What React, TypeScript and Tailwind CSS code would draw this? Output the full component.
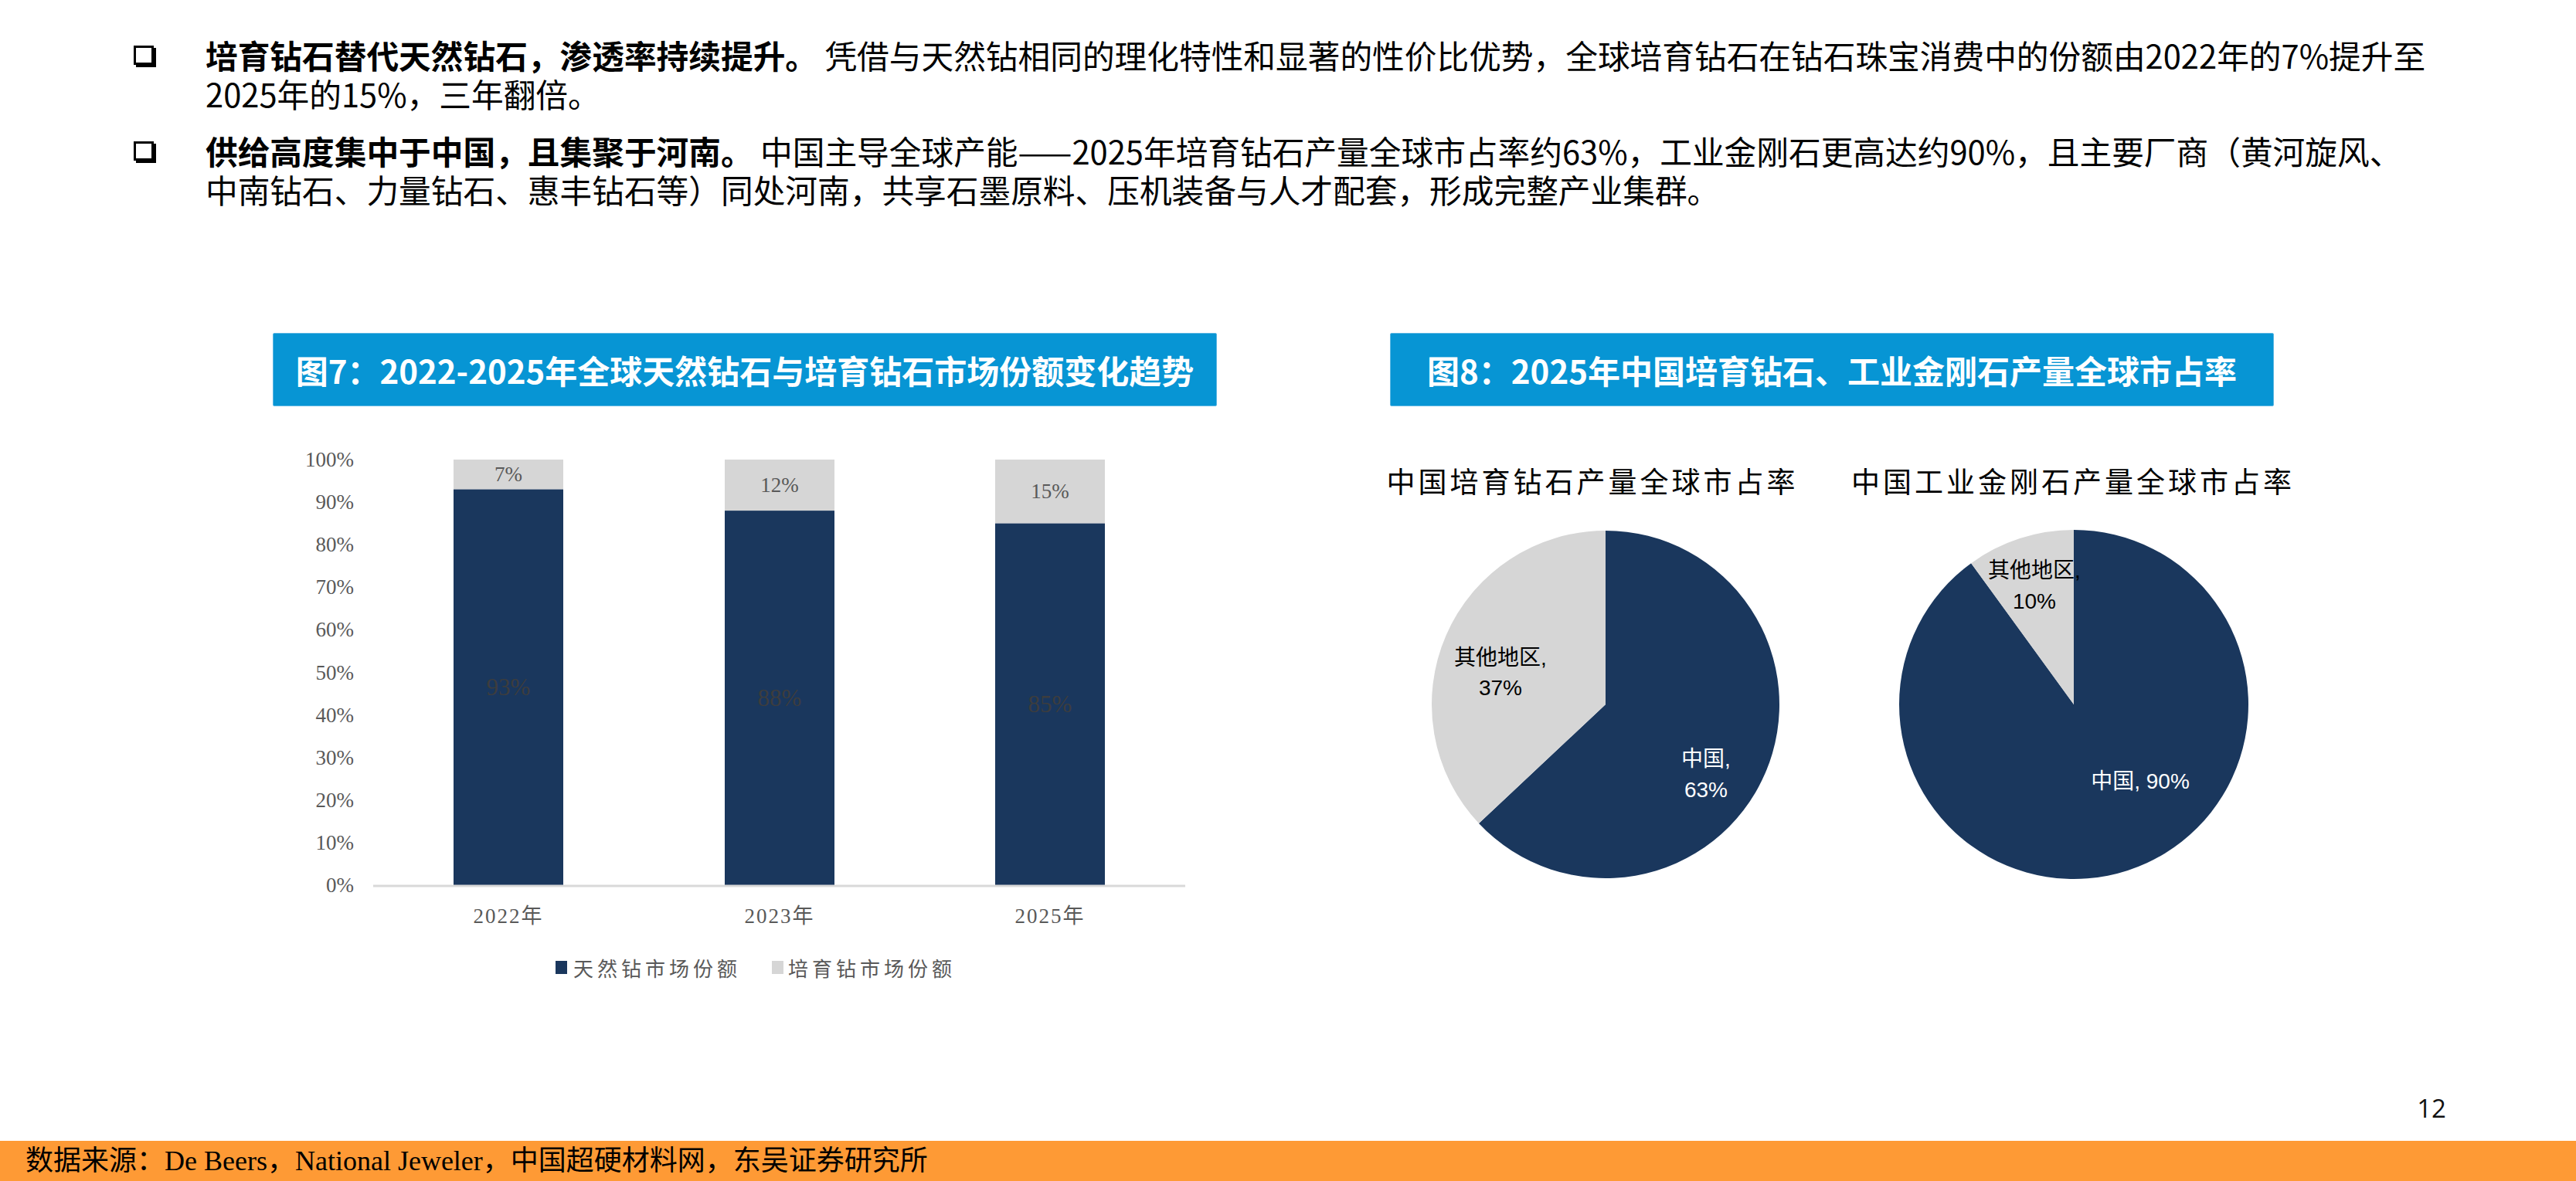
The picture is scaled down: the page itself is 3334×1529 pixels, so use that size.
import React from "react"

const NAVY = "#1a375d"
const GREY = "#d6d6d6"

function Bullet() {
    return (
        <div className="h-[50px] w-[32px] shrink-0 flex items-center">
            <div className="w-[26px] h-[25px] border-[3px] border-black bg-white shadow-[3px_3px_0_#000]" />
        </div>
    )
}

function TitleBox({ children, width }: { children: React.ReactNode; width: string }) {
    return (
        <div className={`${width} h-[95px] bg-[#0795d4] border border-[#5cb6e2] rounded-[2px] flex items-center justify-center`}>
            <span className="text-white font-bold text-[42px] leading-none whitespace-nowrap">{children}</span>
        </div>
    )
}

const bars = [
    { year: "2022年", natural: 93, lab: 7, x: 234 },
    { year: "2023年", natural: 88, lab: 12, x: 585 },
    { year: "2025年", natural: 85, lab: 15, x: 935 },
]

function BarChart() {
    const base = 606
    const unit = 5.51
    const serif = "'Liberation Serif', 'Noto Sans CJK SC', serif"
    return (
        <svg width={1222} height={760} className="block">
            {[0, 10, 20, 30, 40, 50, 60, 70, 80, 90, 100].map((v) => (
                <text key={v} x={105} y={base - unit * v} textAnchor="end" dominantBaseline="central" fontSize={27} fill="#595959" fontFamily={serif}>
                    {v}%
                </text>
            ))}
            {bars.map((b) => {
                const top = base - unit * 100
                const split = base - unit * b.natural
                return (
                    <g key={b.year}>
                        <rect x={b.x} y={top} width={142} height={split - top} fill={GREY} />
                        <rect x={b.x} y={split} width={142} height={base - split} fill={NAVY} />
                        <text x={b.x + 71} y={(top + split) / 2} textAnchor="middle" dominantBaseline="central" fontSize={27} fill="#595959" fontFamily={serif}>
                            {b.lab}%
                        </text>
                        <text x={b.x + 71} y={(split + base) / 2} textAnchor="middle" dominantBaseline="central" fontSize={31} fill="#3d3d3d" fontFamily={serif}>
                            {b.natural}%
                        </text>
                        <text x={b.x + 71} y={646} textAnchor="middle" dominantBaseline="central" fontSize={27} letterSpacing={2} fill="#595959" fontFamily={serif}>
                            {b.year}
                        </text>
                    </g>
                )
            })}
            <line x1={130} x2={1181} y1={base + 1} y2={base + 1} stroke="#d9d9d9" strokeWidth={3} />
            <rect x={366} y={704} width={15} height={17} fill={NAVY} />
            <text x={389} y={715} dominantBaseline="central" fontSize={26} letterSpacing={5} fill="#595959" fontFamily={serif}>
                天然钻市场份额
            </text>
            <rect x={646} y={704} width={15} height={17} fill={GREY} />
            <text x={667} y={715} dominantBaseline="central" fontSize={26} letterSpacing={5} fill="#595959" fontFamily={serif}>
                培育钻市场份额
            </text>
        </svg>
    )
}

function piePaths(cx: number, cy: number, r: number, share: number) {
    const a = share * 2 * Math.PI
    const ex = cx + r * Math.sin(a)
    const ey = cy - r * Math.cos(a)
    const big = share > 0.5 ? 1 : 0
    const main = `M${cx},${cy} L${cx},${cy - r} A${r},${r} 0 ${big} 1 ${ex},${ey} Z`
    const rest = `M${cx},${cy} L${ex},${ey} A${r},${r} 0 ${1 - big} 1 ${cx},${cy - r} Z`
    return { main, rest }
}

function PieCharts() {
    const sans = "'Liberation Sans', 'Noto Sans CJK SC', sans-serif"
    const p1 = piePaths(279, 372, 225, 0.63)
    const p2 = piePaths(885, 372, 226, 0.9)
    return (
        <svg width={1144} height={660} className="block overflow-visible">
            <text x={262} y={82} textAnchor="middle" dominantBaseline="central" fontSize={37} letterSpacing={4} fill="#000" fontFamily="'Noto Sans CJK SC', sans-serif">
                中国培育钻石产量全球市占率
            </text>
            <text x={884} y={82} textAnchor="middle" dominantBaseline="central" fontSize={37} letterSpacing={4} fill="#000" fontFamily="'Noto Sans CJK SC', sans-serif">
                中国工业金刚石产量全球市占率
            </text>

            <path d={p1.main} fill={NAVY} />
            <path d={p1.rest} fill={GREY} />
            <text x={143} y={311} textAnchor="middle" dominantBaseline="central" fontSize={28} fill="#000" fontFamily={sans}>其他地区,</text>
            <text x={143} y={350} textAnchor="middle" dominantBaseline="central" fontSize={28} fill="#000" fontFamily={sans}>37%</text>
            <text x={409} y={442} textAnchor="middle" dominantBaseline="central" fontSize={28} fill="#fff" fontFamily={sans}>中国,</text>
            <text x={409} y={482} textAnchor="middle" dominantBaseline="central" fontSize={28} fill="#fff" fontFamily={sans}>63%</text>

            <path d={p2.main} fill={NAVY} />
            <path d={p2.rest} fill={GREY} />
            <text x={834} y={198} textAnchor="middle" dominantBaseline="central" fontSize={28} fill="#000" fontFamily={sans}>其他地区,</text>
            <text x={834} y={238} textAnchor="middle" dominantBaseline="central" fontSize={28} fill="#000" fontFamily={sans}>10%</text>
            <text x={971} y={471} textAnchor="middle" dominantBaseline="central" fontSize={28} fill="#fff" fontFamily={sans}>中国, 90%</text>
        </svg>
    )
}

export default function App() {
    return (
        <div className="w-[3334px] h-[1529px] bg-white flex flex-col overflow-hidden font-['Noto_Sans_CJK_SC',sans-serif] text-black">
            <div className="pt-[46px] pl-[173px] flex flex-col gap-[24px] text-[41.7px] leading-[50px]">
                <div className="flex gap-[61px]">
                    <Bullet />
                    <p className="whitespace-nowrap">
                        <span className="font-bold">培育钻石替代天然钻石，渗透率持续提升。</span> 凭借与天然钻相同的理化特性和显著的性价比优势，全球培育钻石在钻石珠宝消费中的份额由2022年的7%提升至
                        <br />
                        2025年的15%，三年翻倍。
                    </p>
                </div>
                <div className="flex gap-[61px]">
                    <Bullet />
                    <p className="whitespace-nowrap">
                        <span className="font-bold">供给高度集中于中国，且集聚于河南。</span> 中国主导全球产能——2025年培育钻石产量全球市占率约63%，工业金刚石更高达约90%，且主要厂商（黄河旋风、
                        <br />
                        中南钻石、力量钻石、惠丰钻石等）同处河南，共享石墨原料、压机装备与人才配套，形成完整产业集群。
                    </p>
                </div>
            </div>

            <div className="mt-[161px] pl-[353px] flex gap-[224px]">
                <div className="flex flex-col gap-[14px]">
                    <TitleBox width="w-[1222px]">图7：2022-2025年全球天然钻石与培育钻石市场份额变化趋势</TitleBox>
                    <BarChart />
                </div>
                <div className="flex flex-col gap-[14px]">
                    <TitleBox width="w-[1144px]">图8：2025年中国培育钻石、工业金刚石产量全球市占率</TitleBox>
                    <PieCharts />
                </div>
            </div>

            <div className="flex-1" />
            <div className="flex justify-end pr-[168px] mb-[22px] h-[40px] text-[33px] leading-[40px] text-[#111] font-['Open_Sans',sans-serif]">
                12
            </div>
            <div className="h-[52px] shrink-0 bg-[#fe9a35] flex items-center pl-[33px] text-[36px] text-black font-['Liberation_Serif','Noto_Sans_CJK_SC',serif] whitespace-nowrap">
                数据来源：De Beers，National Jeweler，中国超硬材料网，东吴证券研究所
            </div>
        </div>
    )
}
